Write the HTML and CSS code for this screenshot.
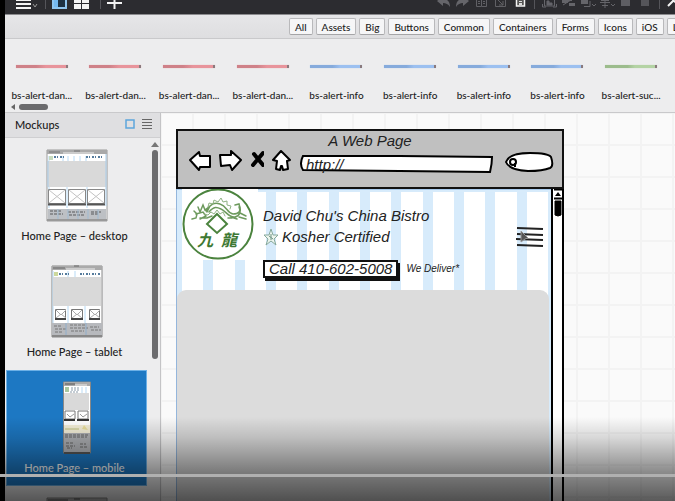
FILE: index.html
```html
<!DOCTYPE html>
<html lang="en">
<head>
<meta charset="utf-8">
<title>Mockups</title>
<link rel="stylesheet" href="styles.css">
</head>
<body>
<div class="player">
  <div class="app">
    <header class="toolbar">
      <div class="tools tools-left">
        <button class="tool-wide" aria-label="Menu"><svg width="28" height="14"><path d="M3 0h15M3 4h15M3 8h15" stroke="#f4f4f4" stroke-width="2"/><path d="M20 4l2 3 2-3" fill="none" stroke="#999" stroke-width="1"/></svg></button>
        <span class="divider"></span>
        <button class="tool-view" aria-label="Toggle sidebar"><svg width="18" height="14"><path d="M2-3h13V8H2z" fill="#1d3143" stroke="#8fc5ef" stroke-width="2"/><path d="M3-2h4V7H3z" fill="#75b9ef"/></svg></button>
        <button class="tool-view" aria-label="Grid view"><svg width="18" height="14"><path d="M1-2h7v5H1zM9-2h7v5H9zM1 4h7v5H1zM9 4h7v5H9z" fill="#f4f4f4"/></svg></button>
        <span class="divider"></span>
        <button class="tool-view" aria-label="Add mockup"><svg width="18" height="14"><path d="M1 3h15M8.500-5V9" stroke="#f4f4f4" stroke-width="2"/></svg></button>
      </div>
      <div class="tools tools-right">
        <button class="tool" aria-label="Undo"><svg width="19" height="14"><path d="M3 1l6-5v3c5 0 7 3 7 8-2-3-4-4-7-4v3z" fill="#65656a"/></svg></button>
        <button class="tool" aria-label="Redo"><svg width="19" height="14"><path d="M16 1l-6-5v3C5-1 3 2 3 7c2-3 4-4 7-4v3z" fill="#65656a"/></svg></button>
        <button class="tool" aria-label="Copy"><svg width="19" height="14" fill="none" stroke="#606065"><path d="M4.500-2v8.500H9M9.500-2v8.500h5V-2M6 1.500h2M6 3.500h2M11 1.500h2M11 3.500h2"/></svg></button>
        <button class="tool" aria-label="Duplicate"><svg width="19" height="14" fill="none" stroke="#606065"><path d="M4.500-1v7.500h10V-1M7 0l5 5M12 1v4H8"/></svg></button>
        <button class="tool" aria-label="Paste"><svg width="19" height="14"><path d="M6.500-1h8v7h-8z" fill="#555" stroke="#f4f4f4" stroke-width="1.500"/><path d="M9 1h3v1H9zM9 3h3v2H9z" fill="#ddd"/></svg></button>
        <span class="divider"></span>
        <button class="tool" aria-label="Group"><svg width="19" height="14" fill="none" stroke="#65656a"><path d="M4.500-2v8h10v-8M2.500 4v3H6M13 7h3.500V4"/><path d="M7 4V1h2v2h3v2H7z" fill="#65656a"/></svg></button>
        <button class="tool" aria-label="Ungroup"><svg width="19" height="14"><path d="M3 0h6v3H3zM10 3h6v3h-6zM8-1h5v2H8z" fill="#65656a"/><path d="M4 5l8-5" stroke="#65656a"/></svg></button>
        <button class="tool" aria-label="Arrange"><svg width="19" height="14"><path d="M3-2h7v6H3z" fill="#65656a"/><path d="M6 6.500h6V1M14 4l2 2 2-2" fill="none" stroke="#65656a"/></svg></button>
        <button class="tool" aria-label="Align"><svg width="19" height="14"><path d="M3 2.500h10M8 0v8M5 5.500h6M14 4l2 2 2-2" fill="none" stroke="#65656a" stroke-width="1"/><path d="M4-2h8v3H4z" fill="#65656a"/></svg></button>
        <button class="tool" aria-label="Lock"><svg width="19" height="14"><path d="M5 0h9v6H5z" fill="#5e5e63"/></svg></button>
        <button class="tool" aria-label="Delete"><svg width="19" height="14"><path d="M6 0h8v6H6z" fill="#55555a"/></svg></button>
        <span class="divider"></span>
        <button class="tool" aria-label="Settings"><svg width="19" height="14"><path d="M3 6l5-5M7-2l2 3 4 3" fill="none" stroke="#f4f4f4" stroke-width="2"/></svg></button>
      </div>
    </header>

    <nav class="categories" aria-label="Control categories">
      <button>All</button><button>Assets</button><button>Big</button><button>Buttons</button><button>Common</button><button>Containers</button><button>Forms</button><button>Icons</button><button>iOS</button><button>L</button>
    </nav>

    <section class="library" aria-label="Controls">
      <ul class="controls">
        <li><i class="strip danger"></i>bs-alert-dan...</li>
        <li><i class="strip danger"></i>bs-alert-dan...</li>
        <li><i class="strip danger"></i>bs-alert-dan...</li>
        <li><i class="strip danger"></i>bs-alert-dan...</li>
        <li><i class="strip info"></i>bs-alert-info</li>
        <li><i class="strip info"></i>bs-alert-info</li>
        <li><i class="strip info"></i>bs-alert-info</li>
        <li><i class="strip info"></i>bs-alert-info</li>
        <li><i class="strip success"></i>bs-alert-suc...</li>
      </ul>
      <div class="hscroll"><i class="arrow-left"></i><i class="hthumb"></i></div>
    </section>

    <div class="workspace">
      <aside class="sidebar">
        <div class="sidebar-head">
          <h2>Mockups</h2>
          <button aria-label="Thumbnails"><svg width="10" height="10"><path d="M1 1h8v8H1z" fill="none" stroke="#5ea6dc" stroke-width="1.500"/></svg></button>
          <button aria-label="List"><svg width="10" height="10"><path d="M0 .5h10M0 3.500h10M0 6.500h10M0 9.500h10" stroke="#666"/></svg></button>
        </div>
        <div class="sidebar-body">
          <ul class="mockups">
            <li>
              <svg class="thumb" width="62" height="73" viewBox="0 0 62 73">
                <path d="M1 1h60v71H1z" fill="#fff" stroke="#9a9a9a"/><path d="M1 1h60v4H1z" fill="#a9a9a9"/><path d="M3 3h11M28 2h6" stroke="#777"/><path d="M17 4h31" stroke="#eee"/>
                <path d="M3 7v52M17 7v6M22 7v6M28 7v6M34 7v6M40 7v6M21 37v22M41 37v22" stroke="#b7daf5"/><path d="M3 7h4v4H3z" fill="#c7dabd"/><path d="M8 8h12M40 8h18" stroke="#557b9c" stroke-width="2" stroke-dasharray="2 1 1 2"/>
                <path d="M2 12h58v26H2z" fill="#d9d9d9"/><path d="M2 12v26M60 5v52" stroke="#a9cdea"/>
                <g fill="#fff" stroke="#888"><path d="M2.500 40.500h17v14h-17zM22.500 40.500h17v14h-17zM41.500 40.500h17v14h-17z"/><path d="M3 41l16 13M19 41L3 54M23 41l16 13M39 41L23 54M42 41l16 13M58 41L42 54" stroke="#c4c4c4"/></g>
                <path d="M2 55.500h18M22 55.500h18M41 55.500h18" stroke="#555" stroke-width="2"/><path d="M2 60h58v10H2z" fill="#bdc0c4"/><path d="M4 62h12M4 65h13M22 63h17M23 66h15M45 63h10M45 65h8" stroke="#8a8c8f" stroke-width="2" stroke-dasharray="3 1"/><path d="M12 60v10M22 60v10M32 60v10M42 60v10M52 60v10" stroke="#9fbbd2"/><path d="M1 71h60" stroke="#999" stroke-width="2"/>
              </svg>
              <span>Home Page – desktop</span>
            </li>
            <li>
              <svg class="thumb" width="52" height="73" viewBox="0 0 52 73">
                <path d="M1 1h50v71H1z" fill="#fff" stroke="#888"/><path d="M1 1h50v4H1z" fill="#aaa"/><path d="M2 3h12M23 1h5" stroke="#666"/><path d="M15 4h29" stroke="#eee"/>
                <path d="M2 6v53M17 6v6M24 6v6M17 41v18M34 41v18" stroke="#b7daf5"/><path d="M3 7h4v4H3z" fill="#cdd89c"/><path d="M8 9h12M29 9h20" stroke="#557b9c" stroke-width="2" stroke-dasharray="2 1 1 2"/>
                <path d="M2 12h48v29H2z" fill="#d9d9d9"/>
                <g fill="#fff" stroke="#777"><path d="M4.500 44.500h10v9h-10zM20.500 44.500h11v9h-11zM38.500 44.500h10v9h-10z"/><path d="M5 45l5 5 5-5M21 45l5 5 5-5M39 45l5 5 5-5M5 53l5-4 5 4M21 53l5-4 5 4M39 53l5-4 5 4" fill="none" stroke="#aaa"/></g>
                <path d="M4 54h11M20 54h12M38 54h11" stroke="#444" stroke-width="2"/><path d="M1 58h50v12H1z" fill="#b7b9bd"/><path d="M3 61h8M4 64h11M4 67h8M19 60h16M19 63h18M20 66h13M39 62h9M40 65h10" stroke="#777" stroke-dasharray="3 1"/><path d="M15 58v12M35 58v12" stroke="#8faecb"/><path d="M1 71h50" stroke="#888" stroke-width="2"/>
              </svg>
              <span>Home Page – tablet</span>
            </li>
            <li class="selected">
              <svg class="thumb" width="28" height="73" viewBox="0 0 28 73">
                <path d="M.5 1h27v71H.5z" fill="#fff" stroke="#888"/><path d="M1 1h26v4H1z" fill="#aaa"/><path d="M2 3h10" stroke="#555"/><path d="M12 4h12" stroke="#eee"/><path d="M2 6h4v5H2z" fill="#a9c7a0"/><path d="M8 7h9M8 9h8M7 11h9" stroke="#8a9aa8" stroke-dasharray="2 1"/><path d="M19 6v6M23 6v6" stroke="#b7daf5"/>
                <path d="M1 12h25v17H1z" fill="#d9d9d9"/><path d="M2 30h10v8H2zM15 30h10v8H15z" fill="#fff" stroke="#777"/><path d="M4 33l3 3 4-3M17 33l3 3 4-3" fill="none" stroke="#999"/><path d="M1 39h11M14 39h12" stroke="#333" stroke-width="2"/>
                <path d="M1 44h26v8H1z" fill="#f4efd8"/><path d="M2 48h14" stroke="#c1c482"/><path d="M21 44l4 5-6-1z" fill="#e9df9d"/><path d="M1 52h26v19H1z" fill="#aeb0b4"/><path d="M2 54h23M2 56h22M3 62h8M3 65h9M4 67h5M17 63h6M17 66h8" stroke="#666" stroke-dasharray="3 1"/><path d="M1 72h26" stroke="#555" stroke-width="2"/>
              </svg>
              <span>Home Page – mobile</span>
            </li>
            <li>
              <svg class="thumb" width="62" height="73" viewBox="0 0 62 73"><path d="M1 1h60v71H1z" fill="#bbb" stroke="#888"/><path d="M2 3h20M28 2h6" stroke="#555"/></svg>
            </li>
          </ul>
          <div class="vscroll"><i class="arrow-up"></i><i class="vthumb"></i></div>
        </div>
      </aside>

      <main class="canvas">
        <div class="browser">
          <div class="chrome">
            <div class="page-title">A Web Page</div>
            <div class="nav-row">
              <svg class="nav-icon" width="24" height="24" viewBox="0 0 24 24"><path d="M2 10L11 2l1 4h10v11H12l-1 3z" fill="#fff" stroke="#000" stroke-width="2" stroke-linejoin="round"/></svg>
              <svg class="nav-icon" width="24" height="24" viewBox="0 0 24 24"><path d="M22 10L12 1v4L1 5l1 11 9-1 2 5z" fill="#fff" stroke="#000" stroke-width="2" stroke-linejoin="round"/></svg>
              <svg class="nav-icon" width="14" height="24" viewBox="0 0 14 24"><path d="M4 4l4 5 5 6M13 3L8 9l-5 6" fill="none" stroke="#000" stroke-width="4" stroke-linecap="round"/></svg>
              <svg class="nav-icon" width="20" height="24" viewBox="0 0 20 24"><path d="M10 1L2 10l4 1-1 8 4 1 1-4h1l1 4 5-1-1-8 3-1z" fill="#fff" stroke="#000" stroke-width="2" stroke-linejoin="round"/></svg>
              <label class="address">
                <svg viewBox="0 0 194 18" preserveAspectRatio="none"><path d="M3 1L100 1l93 1q0 7-2 15L100 16 3 15Q-1 9 3 1z" fill="#fff" stroke="#000" stroke-width="2"/></svg>
                <input type="text" value="http://" aria-label="Address">
              </label>
              <label class="search">
                <svg viewBox="0 0 50 22"><path d="M2 11Q5 2 26 2q18 0 21 4 3 9-1 11-7 3-22 3Q5 19 2 11z" fill="#fff" stroke="#000" stroke-width="2"/><circle cx="9" cy="11" r="3" fill="none" stroke="#000" stroke-width="2"/><path d="M11 12v4" stroke="#000" stroke-width="2"/></svg>
                <input type="text" aria-label="Search">
              </label>
            </div>
          </div>
          <div class="viewport">
            <div class="page">
              <div class="columns"><i></i><i></i><i></i><i></i><i></i><i></i><i></i><i></i><i></i><i></i><i></i><i></i></div>
              <div class="masthead">
                <svg class="logo" width="76" height="71" viewBox="0 0 76 71" role="img" aria-label="David Chu's China Bistro logo">
                  <circle cx="36" cy="35" r="34.500" fill="#fff" stroke="#4b833e" stroke-width="2"/>
                  <g fill="none" stroke="#6d9a5d" stroke-linecap="round"><path d="M12 22l3 3-1 4-4 1M16 18l2 5 3-7 2 5 5-4-3 6M14 25l7-2 3 4-6 3M24 22c5-7 8-9 14-7 7 2 7 9 13 10 6 0 8-3 6-7M27 23c5-6 8-5 12-3 5 2 8 9 14 8 5-1 6-6 5-10M53 16l4-1 1 4M18 29h7l5-2M49 28l6 2M57 28l7 2M58 24l6 3M46 29h4" stroke-width="1.500"/><path d="M26 18l1-4 4 1 1-4 4 2 3-4 2 4 4-1v4l4 1-1 3M22 25l4 1 3-3 3 2 3-4 3 4 3-2 2 4" stroke="#8fb283"/></g>
                  <path d="M35 25l10 10-10 9-10-9z" fill="#fff" stroke="#4b833e" stroke-width="2"/>
                  <text class="hanzi" x="15" y="57">九</text><text class="hanzi" x="39" y="57">龍</text>
                </svg>
                <div class="intro">
                  <div class="line">David Chu's China Bistro</div>
                  <div class="line kosher"><svg width="16" height="18" viewBox="0 0 16 18"><path d="M8 1l2 6h5l-4 4 2 6-5-4-5 4 2-6-4-4h5z" fill="#edf5ee" stroke="#87a99b"/><path d="M8 6v6M6 8l4 3" stroke="#6f9484"/></svg>Kosher Certified</div>
                  <div class="call-row"><button class="call">Call 410-602-5008</button><span class="deliver">We Deliver*</span></div>
                </div>
                <button class="menu" aria-label="Menu"><svg width="28" height="22" viewBox="0 0 28 22"><path d="M1 2l26 1M1 8l26 1M0 13l27 1M1 19l26 1" stroke="#222" stroke-width="2"/><path d="M5 5l7 7-3 1-4 3z" fill="#555" stroke="#999"/></svg></button>
              </div>
              <div class="hero"></div>
            </div>
            <div class="page-scroll"><svg width="8" height="30" viewBox="0 0 8 30"><path d="M0 .5h8M0 9.500h8" stroke="#000" stroke-width="2"/><path d="M4 3l3 4H1z"/><path d="M1 12h6v14q-3 2-6 0z" stroke="#000"/></svg></div>
          </div>
        </div>
      </main>
    </div>
  </div>
  <div class="shade"><div class="progress" role="progressbar" aria-label="Playback"></div></div>
</div>
</body>
</html>
```
FILE: styles.css
```css
* { box-sizing: border-box; }
body { margin: 0; background: #000; font-family: Lato, sans-serif; font-size: 11px; font-weight: 500; color: #222; }
button { font: inherit; color: inherit; margin: 0; padding: 0; border: 0; background: none; }
ul { list-style: none; margin: 0; padding: 0; }
svg { display: block; flex: none; }

.player { position: relative; height: 100vh; overflow: hidden; padding-left: 5px; }
.app { display: flex; flex-direction: column; height: 100%; background: #ededee; }

/* Toolbar */
.toolbar { display: flex; justify-content: space-between; flex: none; height: 15px; overflow: hidden; background: #2c2c30; border-bottom: 1px solid #8b8b8e; }
.tools { display: flex; }
.tools-left { padding-left: 8px; }
.tools-right { margin-right: -9px; }
.tool-wide { width: 27px; }
.tool { width: 19px; }
.tool-view { width: 22px; }
.tools button { display: flex; align-items: flex-start; }
.divider { width: 1px; height: 9px; margin: 0 5px; background: #55555a; }

/* Category filter */
.categories { display: flex; flex: none; gap: 3px; height: 24px; padding: 3px 0 0 284px; overflow: hidden; background: linear-gradient(#e6e6e8, #dedee0); border-bottom: 1px solid #c9c9cb; }
.categories button { flex: none; height: 17px; padding: 0 5px; line-height: 14px; background: #f6f6f7; border: 1px solid #b9b9bb; border-bottom-color: #a5a5a7; border-radius: 2px; font-size: 10px; }

/* Control library */
.library { flex: none; height: 74px; overflow: hidden; border-bottom: 1px solid #c9c9cb; }
.controls { display: grid; grid-template-columns: repeat(9, 1fr); padding-right: 7px; }
.controls li { display: flex; flex-direction: column; align-items: center; gap: 20px; padding-top: 26px; line-height: 15px; font-size: 10px; white-space: nowrap; }
.strip { width: 52px; height: 3px; border-right: 2px solid #8a7a7d; }
.danger { background: linear-gradient(90deg, #cf8188 40%, #e8949b 60%); box-shadow: 0 0 1px #e8949b; }
.info { background: linear-gradient(90deg, #86abdc 45%, #9cc0f0 60%); box-shadow: 0 0 1px #9cc0f0; }
.success { background: linear-gradient(90deg, #9cbc8c 45%, #b4d3a4 60%); box-shadow: 0 0 1px #b4d3a4; }
.hscroll { display: flex; align-items: center; gap: 4px; padding: 0 6px; height: 8px; }
.arrow-left { border: 3px solid transparent; border-right: 4px solid #666; border-left: 0; }
.hthumb { width: 29px; height: 6px; border-radius: 3px; background: #6b6b6d; }

.workspace { display: flex; flex: 1; min-height: 0; }

/* Mockup list */
.sidebar { display: flex; flex-direction: column; flex: none; width: 156px; border-right: 1px solid #c4c4c6; }
.sidebar-head { display: flex; align-items: center; flex: none; gap: 7px; height: 25px; padding: 0 8px 2px 10px; background: #dfdfe1; border-bottom: 1px solid #cfcfd1; }
.sidebar-head h2 { flex: 1; margin: 0; font-size: 11px; font-weight: 500; }
.sidebar-body { display: flex; flex: 1; min-height: 0; overflow: hidden; }
.mockups { flex: 1; }
.mockups li { display: flex; flex-direction: column; align-items: center; gap: 6px; height: 116px; margin: 0 4px 0 1px; padding-top: 10px; border: 1px solid transparent; line-height: 16px; white-space: nowrap; }
.mockups li span { margin-right: 4px; }
.mockups .selected { background: #1d78c3; border-color: #6cb0e6; color: #fff; }
.vscroll { display: flex; flex-direction: column; align-items: center; gap: 3px; width: 9px; padding: 4px 1px 0 0; }
.arrow-up { border: 4px solid transparent; border-bottom: 5px solid #777; border-top: 0; }
.vthumb { width: 6px; height: 209px; border-radius: 3px; background: #6c6c6e; }

/* Canvas with grid */
.canvas { flex: 1; min-width: 0; overflow: hidden; padding: 16px 0 0 15px; background-color: #fafafa; background-image: linear-gradient(90deg, #f3f3f3 2px, transparent 2px), linear-gradient(#f3f3f3 2px, transparent 2px); background-size: 32px 32px; background-position: 31px 31px; }
.browser { display: flex; flex-direction: column; width: 388px; height: 100%; font-family: "Liberation Sans", sans-serif; font-style: italic; font-size: 15px; font-weight: 400; color: #222; }
.chrome { flex: none; height: 60px; background: #c0c0c0; border: 2px solid #111; }
.page-title { line-height: 20px; text-align: center; }
.nav-row { display: flex; align-items: flex-end; gap: 7px; height: 22px; padding: 0 8px 0 10px; }
.nav-icon { align-self: center; }
.address { position: relative; flex: 1; height: 18px; margin-left: 2px; }
.search { position: relative; width: 50px; height: 22px; margin: 0 0 0 4px; }
.address svg, .search svg { position: absolute; inset: 0; width: 100%; height: 100%; }
.address input, .search input { position: relative; display: block; width: 100%; height: 100%; padding: 0 6px; border: 0; background: none; font: inherit; color: inherit; }
.search input { padding-left: 16px; }

.viewport { display: flex; flex: 1; border-right: 2px solid #000; background: #fff; }
.page { position: relative; display: flex; flex-direction: column; flex: 1; border-left: 1px solid #94b6dc; }
.columns { position: absolute; inset: 0; display: grid; grid-template-columns: repeat(12, 1fr); gap: 10px; padding: 2px 3px 0 5px; background: #d7ebfb; border-top: 1px solid #a9cbed; }
.columns i { background: #fff; }
.masthead { position: relative; display: flex; height: 101px; }
.logo { margin: 0 0 0 5px; background: #fff; }
.intro { flex: 1; padding: 16px 0 0 5px; line-height: 21px; white-space: nowrap; }
.kosher { display: flex; align-items: center; gap: 3px; }
.call-row { display: flex; align-items: center; gap: 8px; padding-top: 13px; }
.call { height: 18px; padding: 0 4px; border: 2px solid #111; background: #fff; box-shadow: 2px 3px 0 #111; line-height: 14px; font-style: italic; }
.deliver { font-size: 10px; line-height: 18px; }
.menu { align-self: flex-start; margin: 37px 7px 0 0; }
.hero { position: relative; flex: 1; margin-right: 2px; background: #dcdcdc; border-radius: 9px 9px 0 0; }
.page-scroll { flex: none; width: 11px; padding-left: 1px; border-left: 2px solid #000; }
.hanzi { font: italic 700 16px "Noto Sans CJK TC", sans-serif; fill: #3e7933; }

/* Playback overlay */
.shade { position: absolute; inset: auto 0 0; height: 84px; padding-top: 57px; background: linear-gradient(transparent, rgba(0, 0, 0, .14) 25%, rgba(0, 0, 0, .44) 65%, rgba(0, 0, 0, .64)); }
.progress { height: 3px; background: #b0b0b0; }
```
